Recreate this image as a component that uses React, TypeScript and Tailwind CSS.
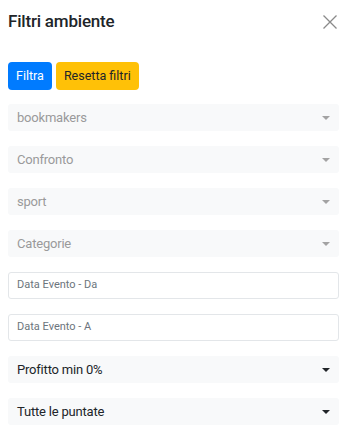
import React from "react";

const font = { fontFamily: 'Roboto, "Open Sans", sans-serif' };

function Caret({ dark }: { dark?: boolean }) {
  return (
    <svg width="8" height="4" viewBox="0 0 8 4" className="shrink-0">
      <path d="M0 0 L8 0 L4 4 Z" fill={dark ? "#212529" : "#a3a3a3"} />
    </svg>
  );
}

function SelectBox({ label, dark }: { label: string; dark?: boolean }) {
  return (
    <div className="h-[27px] bg-[#f8f9fa] rounded-[3px] flex items-center justify-between pl-[9px] pr-[9px]">
      <span className={dark ? "text-[13px] tracking-[-0.2px] text-[#212529]" : "text-[13px] tracking-[-0.2px] text-[#9a9a9a]"}>{label}</span>
      <Caret dark={dark} />
    </div>
  );
}

function DateInput({ label }: { label: string }) {
  return (
    <div className="h-[27px] bg-white border border-[#e3e6e9] rounded-[3px] flex items-center pl-[8px]">
      <span className="text-[11px] text-[#6c757d]">{label}</span>
    </div>
  );
}

export default function App() {
  return (
    <div className="w-[349px] h-[432px] bg-white overflow-hidden" style={font}>
      <div className="flex items-center justify-between pl-[8px] pr-[12px] pt-[4px] h-[40px]">
        <span className="text-[17px] text-[#212529] font-medium tracking-[-0.2px]">Filtri ambiente</span>
        <svg width="14" height="14" viewBox="0 0 14 14">
          <path d="M0.5 0.5 L13.5 13.5 M13.5 0.5 L0.5 13.5" stroke="#8a8a8a" strokeWidth="1.3" />
        </svg>
      </div>
      <div className="flex gap-[4px] pl-[8px] mt-[22px]">
        <button className="h-[28px] px-[8px] bg-[#007bff] text-white text-[12.5px] rounded-[4px]">Filtra</button>
        <button className="h-[28px] px-[8px] bg-[#ffc107] text-[#212529] text-[12.5px] rounded-[4px]">Resetta filtri</button>
      </div>
      <div className="flex flex-col gap-[15px] px-[8px] pr-[10px] mt-[14px]">
        <SelectBox label="bookmakers" />
        <SelectBox label="Confronto" />
        <SelectBox label="sport" />
        <SelectBox label="Categorie" />
        <DateInput label="Data Evento - Da" />
        <DateInput label="Data Evento - A" />
        <SelectBox label="Profitto min 0%" dark />
        <SelectBox label="Tutte le puntate" dark />
      </div>
    </div>
  );
}
